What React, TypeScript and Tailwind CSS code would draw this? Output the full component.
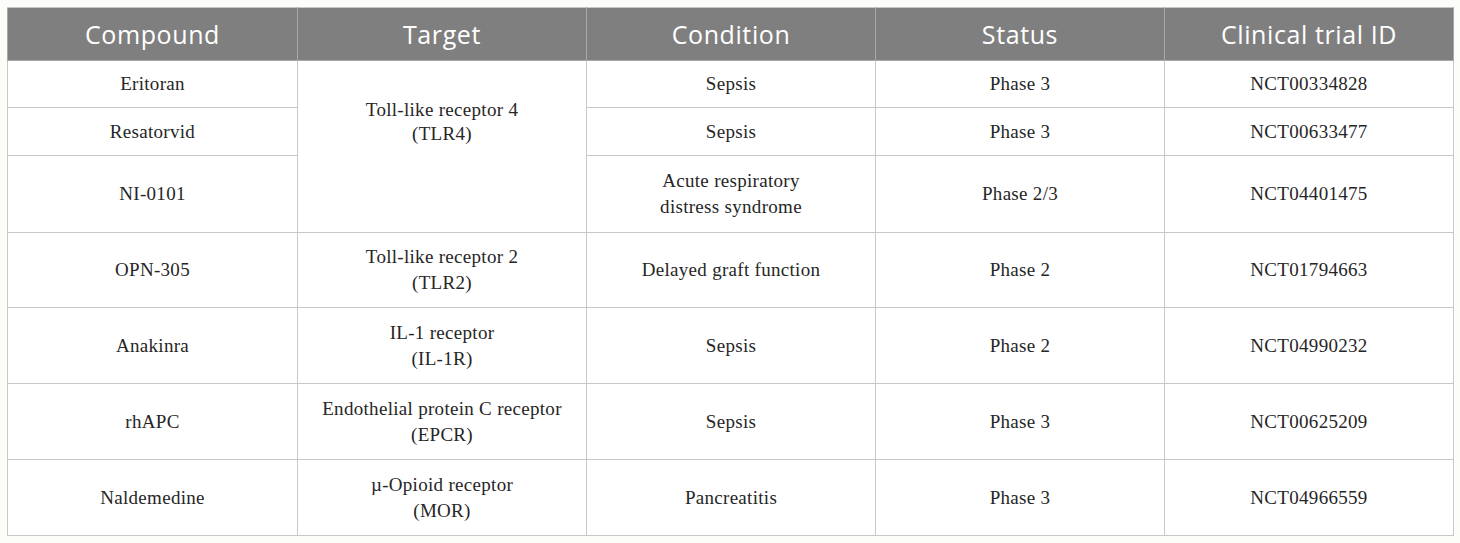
import React from 'react';

type Row = {
  compound: string;
  target?: string[];
  targetSpan?: number;
  condition: string[];
  status: string;
  id: string;
  h: string;
};

const rows: Row[] = [
  { compound: 'Eritoran', target: ['Toll-like receptor 4', '(TLR4)'], targetSpan: 3, condition: ['Sepsis'], status: 'Phase 3', id: 'NCT00334828', h: 'h-[47px]' },
  { compound: 'Resatorvid', condition: ['Sepsis'], status: 'Phase 3', id: 'NCT00633477', h: 'h-[48px]' },
  { compound: 'NI-0101', condition: ['Acute respiratory', 'distress syndrome'], status: 'Phase 2/3', id: 'NCT04401475', h: 'h-[77px]' },
  { compound: 'OPN-305', target: ['Toll-like receptor 2', '(TLR2)'], condition: ['Delayed graft function'], status: 'Phase 2', id: 'NCT01794663', h: 'h-[75px]' },
  { compound: 'Anakinra', target: ['IL-1 receptor', '(IL-1R)'], condition: ['Sepsis'], status: 'Phase 2', id: 'NCT04990232', h: 'h-[76px]' },
  { compound: 'rhAPC', target: ['Endothelial protein C receptor', '(EPCR)'], condition: ['Sepsis'], status: 'Phase 3', id: 'NCT00625209', h: 'h-[76px]' },
  { compound: 'Naldemedine', target: ['\u00b5-Opioid receptor', '(MOR)'], condition: ['Pancreatitis'], status: 'Phase 3', id: 'NCT04966559', h: 'h-[76px]' },
];

const headers = ['Compound', 'Target', 'Condition', 'Status', 'Clinical trial ID'];

function Lines({ lines }: { lines: string[] }) {
  return (
    <>
      {lines.map((l, i) => (
        <div key={i}>{l}</div>
      ))}
    </>
  );
}

export default function App() {
  const cell = 'border border-[#c8c8c8] text-center align-middle px-2';
  return (
    <div className="w-[1460px] h-[543px] bg-[#fcfcf8] pt-[7px] pl-[7px]">
      <table className="border-collapse table-fixed w-[1446px] bg-white text-[#262626] text-[19px] tracking-[0.3px] leading-[26px] font-['Liberation_Serif',serif]">
        <colgroup>
          <col className="w-[290px]" />
          <col className="w-[289px]" />
          <col className="w-[289px]" />
          <col className="w-[289px]" />
          <col className="w-[289px]" />
        </colgroup>
        <thead>
          <tr className="h-[53px] bg-[#7f7f7f]">
            {headers.map((h) => (
              <th
                key={h}
                className="border border-[#a8a8a8] border-t-[#c8c8c8] text-white font-normal text-[25px] tracking-[0.6px] font-['Open_Sans',sans-serif]"
              >
                {h}
              </th>
            ))}
          </tr>
        </thead>
        <tbody>
          {rows.map((r) => (
            <tr key={r.compound} className={r.h}>
              <td className={cell}>{r.compound}</td>
              {r.target && (
                <td
                  className={r.targetSpan ? `${cell} pb-[50px] leading-[24px]` : cell}
                  rowSpan={r.targetSpan ?? 1}
                >
                  <Lines lines={r.target} />
                </td>
              )}
              <td className={cell}>
                <Lines lines={r.condition} />
              </td>
              <td className={cell}>{r.status}</td>
              <td className={cell}>{r.id}</td>
            </tr>
          ))}
        </tbody>
      </table>
    </div>
  );
}
